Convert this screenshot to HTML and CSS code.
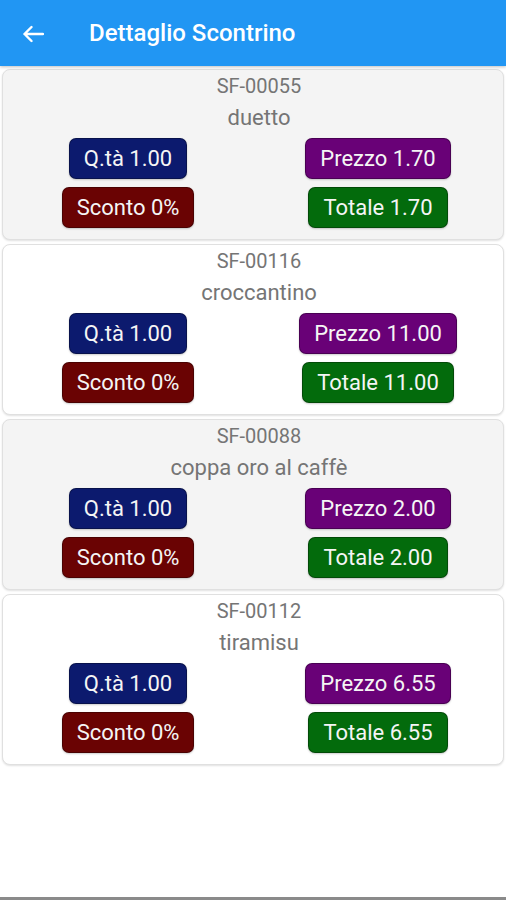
FILE: index.html
```html
<!DOCTYPE html>
<html lang="it">
<head>
  <meta charset="UTF-8">
  <title>Dettaglio Scontrino</title>
  <link rel="stylesheet" href="styles.css">
</head>
<body>
  <div class="schermo">
    <header class="barra">
      <svg class="indietro" width="22" height="18" viewBox="0 0 22 18">
        <path d="M21 9H2.5M9.5 2L2.5 9l7 7" fill="none" stroke="#fff" stroke-width="2.4" stroke-linecap="round" stroke-linejoin="round"/>
      </svg>
      <h1>Dettaglio Scontrino</h1>
    </header>

    <main class="lista">
      <div class="riga grigia">
        <div class="codice">SF-00055</div>
        <div class="nome">duetto</div>
        <div class="valori">
          <span class="tag qta">Q.tà 1.00</span>
          <span class="tag prezzo">Prezzo 1.70</span>
          <span class="tag sconto">Sconto 0%</span>
          <span class="tag totale">Totale 1.70</span>
        </div>
      </div>

      <div class="riga">
        <div class="codice">SF-00116</div>
        <div class="nome">croccantino</div>
        <div class="valori">
          <span class="tag qta">Q.tà 1.00</span>
          <span class="tag prezzo">Prezzo 11.00</span>
          <span class="tag sconto">Sconto 0%</span>
          <span class="tag totale">Totale 11.00</span>
        </div>
      </div>

      <div class="riga grigia">
        <div class="codice">SF-00088</div>
        <div class="nome">coppa oro al caffè</div>
        <div class="valori">
          <span class="tag qta">Q.tà 1.00</span>
          <span class="tag prezzo">Prezzo 2.00</span>
          <span class="tag sconto">Sconto 0%</span>
          <span class="tag totale">Totale 2.00</span>
        </div>
      </div>

      <div class="riga">
        <div class="codice">SF-00112</div>
        <div class="nome">tiramisu</div>
        <div class="valori">
          <span class="tag qta">Q.tà 1.00</span>
          <span class="tag prezzo">Prezzo 6.55</span>
          <span class="tag sconto">Sconto 0%</span>
          <span class="tag totale">Totale 6.55</span>
        </div>
      </div>
    </main>
  </div>
</body>
</html>
```

FILE: styles.css
```css
body {
  margin: 0;
  background-color: #fff;
  font-family: Roboto, 'Liberation Sans', sans-serif;
}

.schermo {
  height: 900px;
  box-sizing: border-box;
  border-bottom: 3px solid #8a8a8a;
  display: flex;
  flex-direction: column;
}

.barra {
  height: 66px;
  background-color: #2196f3;
  display: flex;
  align-items: center;
  padding-left: 22px;
  box-shadow: 0 1px 3px rgba(0, 0, 0, 0.25);
  position: relative;
  z-index: 1;
}

.indietro {
  margin-top: 1px;
}

.barra h1 {
  margin: 0 0 0 45px;
  color: white;
  font-size: 24px;
  font-weight: 500;
}

.lista {
  padding: 3px 2px 0;
  display: flex;
  flex-direction: column;
  gap: 4px;
}

.riga {
  background-color: #fff;
  border: 1px solid #e0e0e0;
  border-radius: 8px;
  box-shadow: 0 1px 2px rgba(0, 0, 0, 0.12);
  padding-bottom: 11px;
  text-align: center;
  color: #757575;
}

.riga.grigia {
  background-color: #f4f4f4;
}

.codice {
  font-size: 20px;
  line-height: 32px;
  padding-left: 12px;
}

.nome {
  font-size: 22px;
  line-height: 32px;
  margin-bottom: 4px;
  padding-left: 12px;
}

.valori {
  display: grid;
  grid-template-columns: 1fr 1fr;
  row-gap: 8px;
  justify-items: center;
}

.tag {
  height: 41px;
  box-sizing: border-box;
  padding: 0 14px;
  display: flex;
  align-items: center;
  border-radius: 7px;
  border: 1px solid rgba(0, 0, 0, 0.3);
  box-shadow: 0 1px 2px rgba(0, 0, 0, 0.2);
  color: #f5f5f5;
  font-size: 22px;
}

.qta {
  background-color: #0c1a6e;
}

.prezzo {
  background-color: #690177;
}

.sconto {
  background-color: #6a0303;
}

.totale {
  background-color: #036b0c;
}
```
